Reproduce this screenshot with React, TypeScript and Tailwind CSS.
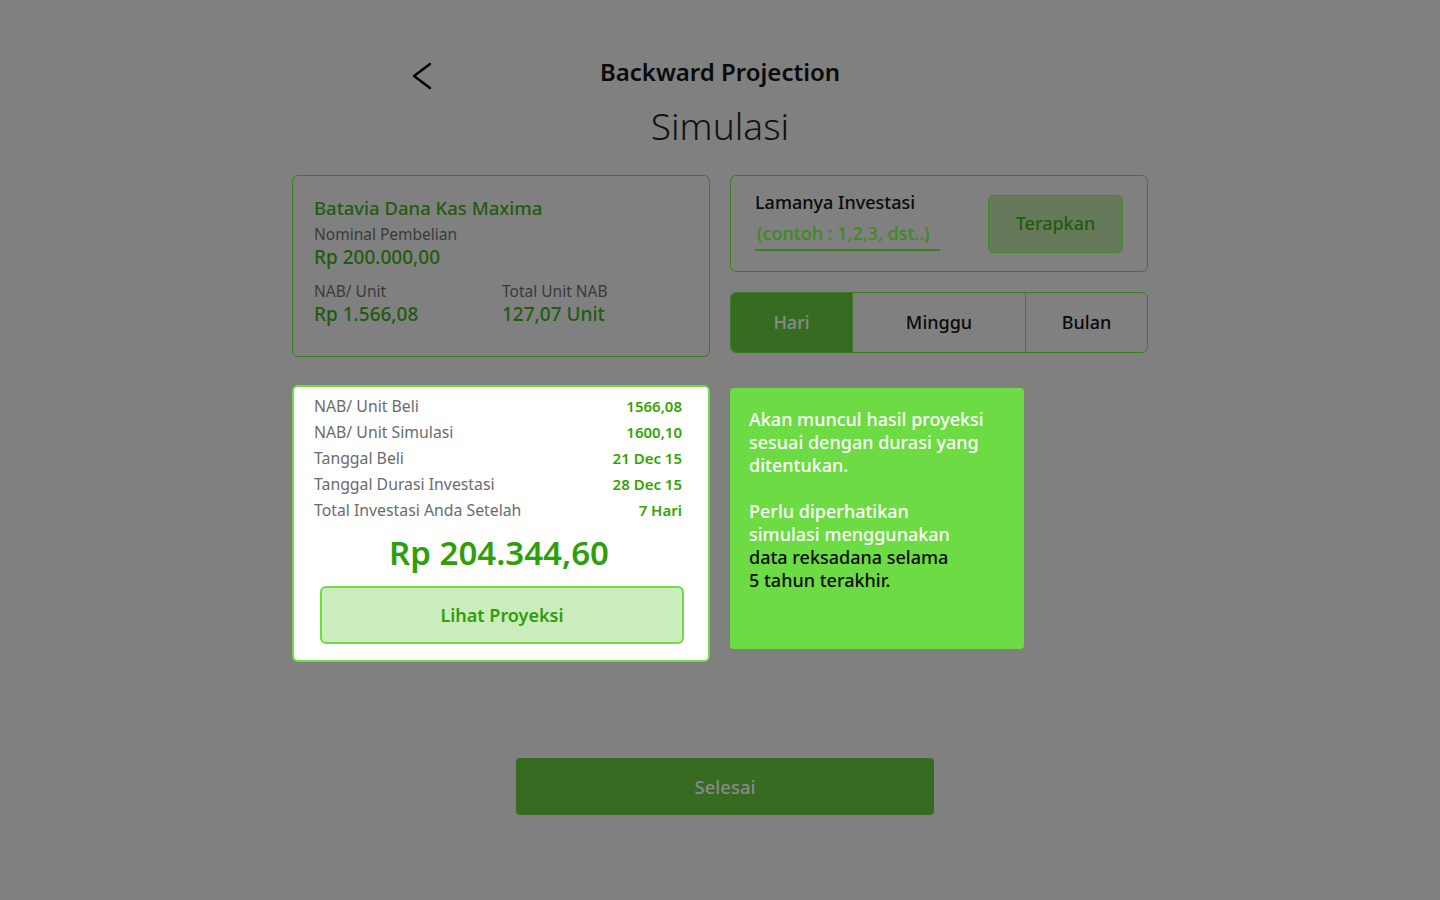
import React from 'react';

const rows = [
  { label: 'NAB/ Unit Beli', value: '1566,08' },
  { label: 'NAB/ Unit Simulasi', value: '1600,10' },
  { label: 'Tanggal Beli', value: '21 Dec 15' },
  { label: 'Tanggal Durasi Investasi', value: '28 Dec 15' },
  { label: 'Total Investasi Anda Setelah', value: '7 Hari' },
];

export default function App() {
  return (
    <div
      className="w-[1440px] h-[900px] bg-[#808080] flex flex-col items-center"
      style={{ fontFamily: '"Noto Sans", Lato, sans-serif' }}
    >
      {/* Header */}
      <div className="relative w-[856px] pt-[57px] flex flex-col items-center">
        <button className="absolute left-[118px] top-[61px] text-black">
          <svg width="24" height="30" viewBox="0 0 24 30" fill="none">
            <path d="M20 3 L4 15 L20 27" stroke="#000" strokeWidth="2.4" strokeLinecap="round" strokeLinejoin="round" />
          </svg>
        </button>
        <h1 className="text-[24px] leading-[30px] font-semibold text-[#0a0a0a]">Backward Projection</h1>
        <h2 className="text-[37px] leading-[46px] font-light text-[#111] mt-[16px]">Simulasi</h2>
      </div>

      {/* Top cards */}
      <div className="w-[856px] grid grid-cols-2 gap-x-[20px] mt-[26px]">
        <div className="h-[182px] border border-[#3d7d22] rounded-[6px] px-[21px] pt-[20px]">
          <p className="text-[18.5px] leading-[24px] font-medium text-[#1f5c0d]">Batavia Dana Kas Maxima</p>
          <p className="text-[15.5px] leading-[20px] text-[#3a3a3a] mt-[4px]">Nominal Pembelian</p>
          <p className="text-[19px] leading-[24px] font-medium text-[#1f5c0d] mt-[1px]">Rp 200.000,00</p>
          <div className="grid grid-cols-[188px_1fr] mt-[12px]">
            <div>
              <p className="text-[15.5px] leading-[20px] text-[#3a3a3a]">NAB/ Unit</p>
              <p className="text-[19px] leading-[26px] font-medium text-[#1f5c0d]">Rp 1.566,08</p>
            </div>
            <div>
              <p className="text-[15.5px] leading-[20px] text-[#3a3a3a]">Total Unit NAB</p>
              <p className="text-[19px] leading-[26px] font-medium text-[#1f5c0d]">127,07 Unit</p>
            </div>
          </div>
        </div>

        <div className="flex flex-col gap-[20px]">
          <div className="h-[97px] border border-[#3d7d22] rounded-[6px] pl-[24px] pr-[24px] flex items-center justify-between">
            <div className="self-start pt-[15px]">
              <p className="text-[18px] leading-[22px] font-medium text-[#0a0a0a]">Lamanya Investasi</p>
              <div className="w-[185px] border-b-2 border-[#3d7d22] mt-[8px] pb-[3px] pl-[2px]">
                <span className="text-[18px] leading-[24px] font-medium text-[#3d8a1f]">(contoh : 1,2,3, dst..)</span>
              </div>
            </div>
            <button className="w-[135px] h-[58px] bg-[#66795a] border border-[#3d8a1f] rounded-[6px] text-[18px] font-medium text-[#1f5c0d]">
              Terapkan
            </button>
          </div>

          <div className="h-[61px] border border-[#3d7d22] rounded-[6px] flex overflow-hidden text-[18px] font-medium">
            <div className="w-[121px] bg-[#376b22] flex items-center justify-center text-[#8a8a8a]">Hari</div>
            <div className="w-[173px] border-l border-[#3d7d22] flex items-center justify-center text-[#0a0a0a]">Minggu</div>
            <div className="flex-1 border-l border-[#3d7d22] flex items-center justify-center text-[#0a0a0a]">Bulan</div>
          </div>
        </div>
      </div>

      {/* Bottom cards */}
      <div className="w-[856px] flex gap-[20px] mt-[28px] items-start">
        <div className="w-[418px] h-[277px] bg-white border-2 border-[#6fdc45] rounded-[6px] px-[20px] pt-[6px]">
          <div className="flex flex-col">
            {rows.map((r) => (
              <div key={r.label} className="flex justify-between items-baseline leading-[26px]">
                <span className="text-[15.8px] text-[#6b6b6b]">{r.label}</span>
                <span className="text-[15px] font-semibold text-[#36a300] pr-[6px]">{r.value}</span>
              </div>
            ))}
          </div>
          <p className="text-center text-[33px] leading-[40px] font-semibold text-[#2f9e0a] mt-[10px] pr-[4px]">Rp 204.344,60</p>
          <button className="mt-[13px] ml-[6px] w-[364px] h-[58px] bg-[#cbedbe] border-2 border-[#6fdc45] rounded-[6px] text-[18px] font-semibold text-[#2f9e0a]">
            Lihat Proyeksi
          </button>
        </div>

        <div className="w-[294px] h-[261px] mt-[3px] bg-[#6ddb43] rounded-[4px] px-[19px] pt-[20px] text-[18px] leading-[23px] font-medium">
          <p className="text-white">
            Akan muncul hasil proyeksi
            <br />
            sesuai dengan durasi yang
            <br />
            ditentukan.
          </p>
          <p className="mt-[23px] text-white">
            Perlu diperhatikan
            <br />
            simulasi menggunakan
          </p>
          <p className="text-[#0a0a0a]">
            data reksadana selama
            <br />5 tahun terakhir.
          </p>
        </div>
      </div>

      {/* Footer */}
      <button className="mt-[96px] ml-[10px] w-[418px] h-[57px] bg-[#376b22] rounded-[4px] text-[18.5px] font-medium text-[#8a8a8a]">
        Selesai
      </button>
    </div>
  );
}
